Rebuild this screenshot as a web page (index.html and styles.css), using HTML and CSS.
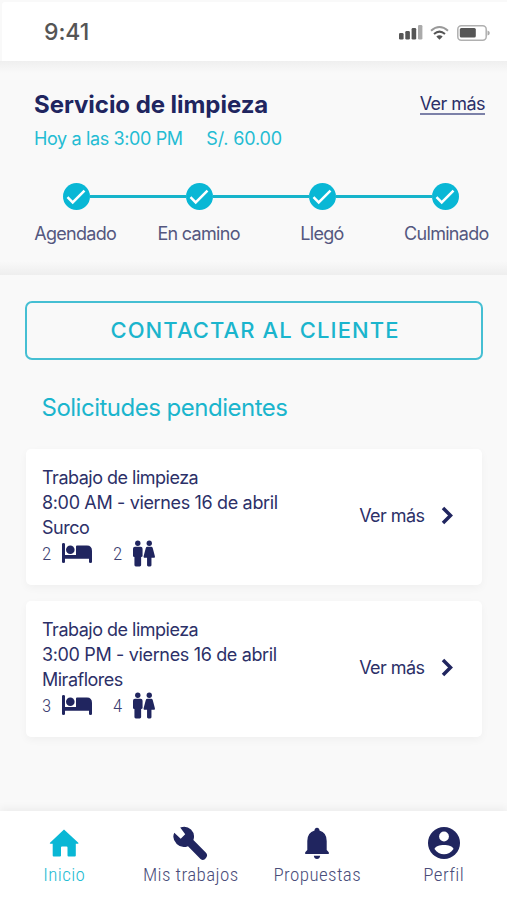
FILE: index.html
```
<!DOCTYPE html>
<html lang="es">
<head>
    <meta charset="UTF-8">
    <meta name="viewport" content="width=device-width, initial-scale=1.0">
    <title>Servicio de limpieza</title>
    <link rel="stylesheet" href="styles.css">
</head>
<body>
<!-- shared icons -->
<svg class="sprite" width="0" height="0">
    <symbol id="bed" viewBox="0 0 30 20">
        <path d="M0 1.2Q0 0 1.5 0T3 1.2V12H27V14H30V19Q30 20 28.5 20T27 19V15.500H3V19Q3 20 1.500 20T0 19Z"/>
        <circle cx="8.300" cy="6.700" r="4.300"/>
        <path d="M14 3.500Q14 2.500 15 2.500H25Q30 2.500 30 8V15.500H3V12.500H14Z"/>
    </symbol>
    <symbol id="people" viewBox="0 0 23 27">
        <circle cx="5" cy="2.800" r="2.800"/>
        <path d="M2 6.500H8Q10 6.500 10 8.500V16Q10 17.200 8.500 17.200V25.500Q8.500 27 7 27H3Q1.500 27 1.500 25.500V17.200Q0 17.200 0 16V8.500Q0 6.500 2 6.500Z"/>
        <circle cx="17" cy="2.800" r="2.800"/>
        <path d="M15 6.500H19Q20.300 6.500 20.700 8L22.900 16.300Q23.200 18 21.500 18H19.300V25.800Q19.300 27 18 27H16Q14.700 27 14.700 25.800V18H12.500Q10.800 18 11.100 16.300L13.300 8Q13.700 6.500 15 6.500Z"/>
    </symbol>
    <symbol id="check" viewBox="0 0 27 27">
        <circle cx="13.500" cy="13.500" r="13.500"/>
        <path class="tick" d="M4.500 14.200L9.700 19.400L21.500 7.600"/>
    </symbol>
</svg>

<div class="app">
    <header class="status-bar">
        <span class="clock">9:41</span>
        <div class="status-icons">
            <svg width="24" height="15" viewBox="0 0 24 15">
                <rect x="0" y="8" width="4.600" height="6.500" rx="1.300"/>
                <rect x="6.300" y="6" width="4.600" height="8.500" rx="1.300"/>
                <rect x="12.600" y="3" width="4.600" height="11.500" rx="1.300"/>
                <rect class="weak" x="19" y="0" width="4.400" height="14.500" rx="1.300"/>
            </svg>
            <svg class="wifi" width="19" height="14" viewBox="0 0 19 14">
                <path class="weak-line" d="M1 4.700Q9.500-2.600 18 4.700"/>
                <path class="line" d="M4 8Q9.500 3.300 15 8"/>
                <path d="M6.300 10.500Q9.500 8 12.700 10.500L9.500 13.700Z"/>
            </svg>
            <svg width="33" height="16" viewBox="0 0 33 16">
                <rect class="shell" x=".8" y=".8" width="28.400" height="14.400" rx="3.500"/>
                <rect x="2.800" y="3" width="16" height="9.500" rx="1.500"/>
                <path class="weak" d="M30.500 5.500Q32.800 6 32.800 8T30.500 10.500Z"/>
            </svg>
        </div>
    </header>

    <section class="service">
        <div class="service-head">
            <h1>Servicio de limpieza</h1>
            <a class="more-link">Ver más</a>
        </div>
        <div class="service-info">
            <span class="date">Hoy a las 3:00 PM</span>
            <span class="price">S/. 60.00</span>
        </div>
        <div class="track">
            <svg><use href="#check"/></svg>
            <i></i>
            <svg><use href="#check"/></svg>
            <i></i>
            <svg><use href="#check"/></svg>
            <i></i>
            <svg><use href="#check"/></svg>
        </div>
        <div class="steps">
            <span>Agendado</span>
            <span>En camino</span>
            <span>Llegó</span>
            <span class="last">Culminado</span>
        </div>
    </section>

    <main>
        <button class="contact-btn">CONTACTAR AL CLIENTE</button>
        <h2>Solicitudes pendientes</h2>

        <div class="card">
            <div class="card-text">
                <p class="job">Trabajo de limpieza</p>
                <p class="when">8:00 AM - viernes 16 de abril</p>
                <p class="place">Surco</p>
                <div class="rooms">
                    <span>2</span>
                    <svg class="bed"><use href="#bed"/></svg>
                    <span>2</span>
                    <svg class="people"><use href="#people"/></svg>
                </div>
            </div>
            <a class="card-more">Ver más
                <svg width="12" height="19" viewBox="0 0 12 19"><path d="M2 2L9.500 9.500L2 17"/></svg>
            </a>
        </div>

        <div class="card">
            <div class="card-text">
                <p class="job">Trabajo de limpieza</p>
                <p class="when">3:00 PM - viernes 16 de abril</p>
                <p class="place">Miraflores</p>
                <div class="rooms">
                    <span>3</span>
                    <svg class="bed"><use href="#bed"/></svg>
                    <span>4</span>
                    <svg class="people"><use href="#people"/></svg>
                </div>
            </div>
            <a class="card-more">Ver más
                <svg width="12" height="19" viewBox="0 0 12 19"><path d="M2 2L9.500 9.500L2 17"/></svg>
            </a>
        </div>
    </main>

    <nav class="tabs">
        <a class="tab active">
            <svg width="36" height="36" viewBox="0 0 36 36"><path d="M18 4.500L32.300 17.700Q33 18.700 31.800 18.700H29.800V30.500Q29.800 31.500 28.800 31.500H22.500Q21.500 31.500 21.500 30.500V22.500Q21.500 21.500 20.500 21.500H16Q15 21.500 15 22.500V30.500Q15 31.500 14 31.500H7.700Q6.700 31.500 6.700 30.500V18.700H4.500Q3.300 18.700 4 17.700Z"/></svg>
            <span>Inicio</span>
        </a>
        <a class="tab">
            <svg width="36" height="36" viewBox="1 0 36 36"><path d="M8.200 2.600Q14.500 .4 19 4.500Q23.500 9 21.400 15L34 27.800Q36.200 30.300 34 33Q31.500 36.500 28.500 34L16 21.200Q9.500 23.700 4.700 19Q-.5 13.500 2.300 7.800L8.700 13.700L13.200 9.200Z"/></svg>
            <span>Mis trabajos</span>
        </a>
        <a class="tab">
            <svg width="36" height="36" viewBox="0 0 36 36"><path d="M18 2.800Q20.300 2.800 20.500 5.500Q27.700 7.500 27.700 16V25L29.800 27.300V29H6.200V27.300L8.300 25V16Q8.300 7.500 15.500 5.500Q15.700 2.800 18 2.800ZM14.800 30.800H21.200Q20.600 34 18 34T14.800 30.800Z"/></svg>
            <span>Propuestas</span>
        </a>
        <a class="tab">
            <svg width="36" height="36" viewBox="0 0 36 36"><circle cx="18" cy="18" r="16"/><circle class="hole" cx="18" cy="11.500" r="4.900"/><path class="hole" d="M8.500 24C10 18.800 26 18.800 27.500 24C23 31 13 31 8.500 24Z"/></svg>
            <span>Perfil</span>
        </a>
    </nav>
</div>
</body>
</html>
```

FILE: styles.css
```
*{
    box-sizing:border-box;
}
body{
    margin:0px;
    background-color:#f9f9f9;
    font-family:Inter, "Liberation Sans", sans-serif;
    color:#2c3068;
}
h1, h2, p{
    margin:0px;
}
.sprite{
    display:block;
}
.app{
    display:flex;
    flex-direction:column;
    height:900px;
    padding-top:2px;
    overflow:hidden;
}

/* status bar */
.status-bar{
    display:flex;
    justify-content:space-between;
    align-items:center;
    height:59px;
    margin-left:2px;
    padding:2px 17px 0px 42px;
    background-color:#fff;
    border-top-left-radius:3px;
}
.clock{
    margin-top:-2px;
    font-size:23px;
    font-weight:450;
    letter-spacing:-0.100px;
    color:#555;
}
.status-icons{
    display:flex;
    align-items:center;
    gap:7px;
    fill:#555;
}
.wifi{
    margin-right:1px;
}
.weak{
    fill:#aaa;
}
.line, .weak-line, .shell{
    fill:none;
    stroke:#555;
    stroke-width:2;
}
.weak-line{
    stroke:#999;
}
.shell{
    stroke:#b0b0b0;
    stroke-width:1.500;
}

/* current service */
.service{
    height:214px;
    padding-top:28px;
    background:linear-gradient(#efefef, #f9f9f9 12px, #f9f9f9 200px, #eee);
}
.service-head{
    display:flex;
    justify-content:space-between;
    padding:0px 22px 0px 34px;
}
h1{
    font-size:24px;
    line-height:32px;
    letter-spacing:-0.050px;
    color:#20255f;
}
.more-link{
    height:26px;
    font-size:18px;
    line-height:29px;
    letter-spacing:-0.550px;
    border-bottom:2px solid #7c81a8;
}
.service-info{
    display:flex;
    gap:23.500px;
    padding-left:34px;
    font-size:18px;
    line-height:35px;
    letter-spacing:-0.370px;
    color:#24bcd3;
}
.price{
    letter-spacing:-0.150px;
}
.track{
    display:flex;
    align-items:center;
    margin:27px 47.500px 0px 62.500px;
}
.track svg{
    width:27px;
    height:27px;
    fill:#09b7d5;
}
.track i{
    flex:1;
    height:3px;
    background-color:#16b4cb;
}
.tick{
    fill:none;
    stroke:#fff;
    stroke-width:2.500;
}
.steps{
    display:grid;
    grid-template-columns:repeat(4, 123.400px);
    margin:10px 0px 0px 13.500px;
    text-align:center;
    font-size:18px;
    line-height:27px;
    letter-spacing:-0.700px;
    color:#54577f;
}
.last{
    padding-left:2px;
}

/* requests */
main{
    flex:1;
    padding:26px 25px 0px;
}
.contact-btn{
    display:block;
    width:458px;
    height:59px;
    border:2px solid #45bfd3;
    border-radius:7px;
    background-color:transparent;
    font-family:inherit;
    font-size:22px;
    font-weight:450;
    line-height:28px;
    letter-spacing:1.100px;
    padding:0px 0px 1px 2px;
    color:#1bb5cd;
}
h2{
    padding:32px 0px 0px 16.500px;
    font-size:24px;
    font-weight:400;
    line-height:32px;
    letter-spacing:-0.500px;
    color:#1bb5cd;
}
.card{
    display:flex;
    justify-content:space-between;
    width:456px;
    height:136px;
    margin:25px 0px 0px 1px;
    padding:16px 29px 0px 16px;
    border-radius:5px;
    background-color:#fff;
    box-shadow:0px 3px 8px rgba(0, 0, 0, 0.04);
}
.card + .card{
    margin-top:16px;
}
.card-text{
    font-size:18px;
    line-height:25.200px;
    letter-spacing:-0.500px;
}
.when{
    letter-spacing:-0.350px;
}
.rooms{
    display:flex;
    align-items:center;
    height:25px;
    fill:#20255f;
}
.rooms span{
    width:20px;
    font-family:"Roboto Condensed", Roboto, sans-serif;
    font-size:19px;
    font-weight:300;
    color:#3c4072;
}
.bed{
    width:30px;
    height:20px;
    margin-right:21px;
}
.people{
    width:22px;
    height:27px;
}
.card-more{
    display:flex;
    align-items:center;
    gap:16.500px;
    height:100px;
    font-size:18px;
    letter-spacing:-0.550px;
}
.card-more svg{
    fill:none;
    stroke:#20255f;
    stroke-width:3.500;
}

/* bottom tabs */
.tabs{
    display:grid;
    grid-template-columns:repeat(4, 126.500px);
    height:89px;
    padding-left:1px;
    background-color:#fff;
    box-shadow:0px -3px 8px rgba(0, 0, 0, 0.05);
}
.tab{
    display:flex;
    flex-direction:column;
    align-items:center;
    padding-top:14px;
    font-family:"Roboto Condensed", Roboto, sans-serif;
    font-size:19px;
    font-weight:350;
    line-height:28px;
    letter-spacing:0.400px;
    color:#4a4d7a;
    fill:#20255f;
}
.tab.active{
    color:#24bcd3;
    fill:#09b7d5;
}
.hole{
    fill:#fff;
}
```
